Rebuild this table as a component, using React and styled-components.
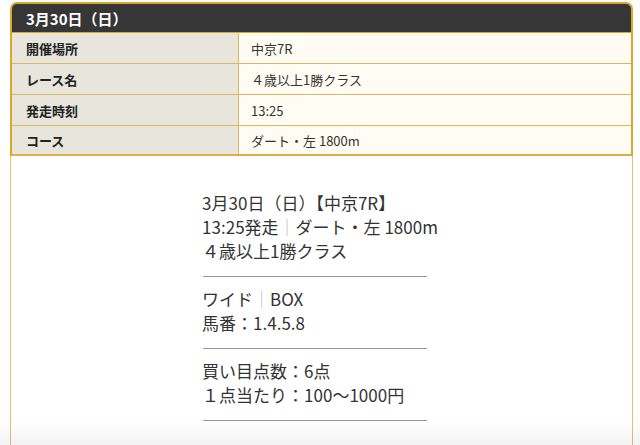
import styled, { createGlobalStyle } from "styled-components";

const GlobalStyle = createGlobalStyle`
  html, body {
    margin: 0;
    padding: 0;
    background: #ffffff;
    font-family: "Noto Sans CJK JP", "Noto Sans", sans-serif;
    color: #333333;
  }
  body::after {
    content: "";
    position: fixed;
    left: 0;
    right: 0;
    bottom: 0;
    height: 24px;
    background: linear-gradient(rgba(0, 0, 0, 0), rgba(0, 0, 0, 0.05));
    pointer-events: none;
  }
`;

const rows = [
  { label: "開催場所", value: "中京7R" },
  { label: "レース名", value: "４歳以上1勝クラス" },
  { label: "発走時刻", value: "13:25" },
  { label: "コース", value: "ダート・左 1800m" },
];

export default function App() {
  return (
    <>
      <GlobalStyle />
      <Page>
        <Card>
          <Header>3月30日（日）</Header>
          <Table>
            {rows.map((row) => (
              <Row key={row.label}>
                <Label>{row.label}</Label>
                <Value>{row.value}</Value>
              </Row>
            ))}
          </Table>
          <Body>
            <Block>
              <Line>3月30日（日）【中京7R】</Line>
              <Line>13:25発走<Sep>｜</Sep>ダート・左 1800m</Line>
              <Line>４歳以上1勝クラス</Line>
              <Divider />
              <Line>ワイド<Sep>｜</Sep>BOX</Line>
              <Line>馬番：1.4.5.8</Line>
              <Divider />
              <Line>買い目点数：6点</Line>
              <Line>１点当たり：100〜1000円</Line>
              <Divider />
            </Block>
          </Body>
        </Card>
      </Page>
    </>
  );
}

const Page = styled.div`
  padding: 2px 7px 0 10px;
`;

const Card = styled.div`
  width: 623px;
  display: flex;
  flex-direction: column;
`;

const Header = styled.div`
  height: 30px;
  box-sizing: border-box;
  padding: 4px 0 0 14px;
  background: #363636;
  border: 2px solid #d9a826;
  border-bottom: none;
  border-radius: 7px 7px 0 0;
  color: #ffffff;
  font-size: 15px;
  font-weight: 700;
  line-height: 22px;
`;

const Table = styled.div`
  border-left: 2px solid #d9a826;
  border-right: 2px solid #d9a826;
  border-top: 1px solid #d9a826;
`;

const Row = styled.div`
  display: grid;
  grid-template-columns: 227px 1fr;
  height: 31px;
  box-sizing: border-box;
  border-bottom: 1px solid #dbb75e;
  &:last-child {
    height: 30px;
    border-bottom: 2px solid #d9b04a;
  }
`;

const Cell = styled.div`
  display: flex;
  align-items: center;
  font-size: 13px;
  color: #222222;
`;

const Label = styled(Cell)`
  background: #e7e5dc;
  padding-left: 14px;
  font-weight: 700;
  border-right: 1px solid #dbb75e;
`;

const Value = styled(Cell)`
  background: #fffcf4;
  padding-left: 12px;
  color: #333333;
`;

const Body = styled.div`
  display: flex;
  justify-content: center;
  padding: 35px 0 40px 0;
  border-left: 1px solid #e3c27a;
  border-right: 1px solid #e3c27a;
  background: #ffffff;
`;

const Block = styled.div`
  display: flex;
  flex-direction: column;
  margin-right: 3px;
`;

const Line = styled.div`
  font-size: 17px;
  line-height: 24px;
  color: #333333;
  white-space: nowrap;
`;

const Sep = styled.span`
  color: #b8b8b8;
`;

const Divider = styled.hr`
  width: 224px;
  margin: 13px 0 10px 1px;
  border: none;
  border-top: 1.5px solid #9a9a9a;
`;
